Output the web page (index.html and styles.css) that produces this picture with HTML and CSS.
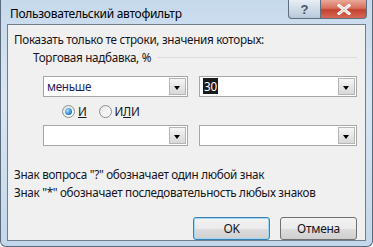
FILE: index.html
```html
<!DOCTYPE html>
<html lang="ru">
<head>
  <meta charset="UTF-8" />
  <title>Пользовательский автофильтр</title>
  <link rel="stylesheet" href="styles.css">
</head>
<body>
  <div class="window">
    <div class="titlebar">
      <span class="title">Пользовательский автофильтр</span>
      <div class="caption-btns">
        <button class="cap-btn help">?</button>
        <button class="cap-btn close">
          <svg width="14" height="11" viewBox="0 0 14 11"><path d="M2 1.5 L12 9.5 M12 1.5 L2 9.5" stroke="#fff" stroke-width="3" stroke-linecap="square"/><path d="M2 1.5 L12 9.5 M12 1.5 L2 9.5" stroke="#5a1e1e" stroke-width="0.6" opacity="0.4"/></svg>
        </button>
      </div>
    </div>

    <div class="client">
      <p class="intro">Показать только те строки, значения которых:</p>
      <div class="group-title">
        <span>Торговая надбавка, %</span>
        <span class="group-line"></span>
      </div>

      <div class="row">
        <div class="combo left"><span class="value">меньше</span><span class="arrow"></span></div>
        <div class="combo right"><span class="value"><span class="sel">30</span></span><span class="arrow"></span></div>
      </div>

      <div class="radios">
        <label class="radio"><span class="dot checked"></span><span><u>И</u></span></label>
        <label class="radio"><span class="dot"></span><span>И<u>Л</u>И</span></label>
      </div>

      <div class="row">
        <div class="combo left"><span class="value"></span><span class="arrow"></span></div>
        <div class="combo right"><span class="value"></span><span class="arrow"></span></div>
      </div>

      <p class="hint first">Знак вопроса "?" обозначает один любой знак</p>
      <p class="hint">Знак "*" обозначает последовательность любых знаков</p>

      <div class="actions">
        <button class="btn default">OK</button>
        <button class="btn">Отмена</button>
      </div>
    </div>
  </div>
</body>
</html>
```

FILE: styles.css
```css
body {
  margin: 0;
  background: #fff;
  font-family: 'Noto Sans', 'Open Sans', sans-serif;
  font-size: 11.7px;
  letter-spacing: -0.3px;
  color: #151520;
}

.window {
  width: 373px;
  height: 247px;
  box-sizing: border-box;
  border-radius: 0 0 6px 6px;
  border: 1px solid #5b6b7c;
  border-top: none;
  background: linear-gradient(180deg, #c6d9ec 0%, #d8e6f3 40%, #c3d7eb 100%);
  display: flex;
  flex-direction: column;
}

.titlebar {
  height: 30px;
  display: flex;
  align-items: flex-start;
  justify-content: space-between;
  padding-left: 9px;
}

.title {
  margin-top: 5px;
  font-size: 12px;
  color: #000;
}

.caption-btns {
  display: flex;
  margin-right: 5px;
}

.cap-btn {
  height: 19px;
  border: 1px solid #5f6f80;
  border-top: none;
  padding: 0;
  display: flex;
  align-items: center;
  justify-content: center;
}

.help {
  width: 32px;
  border-radius: 0 0 0 4px;
  border-right: none;
  background: linear-gradient(180deg, #e8eef5 0%, #cfdbe8 50%, #b9c9da 100%);
  color: #435669;
  font-size: 13px;
  font-weight: bold;
}

.close {
  width: 47px;
  border-radius: 0 0 4px 0;
  background: linear-gradient(180deg, #e9a99a 0%, #d7705e 45%, #c4412f 55%, #d66a56 100%);
}

.client {
  flex: 1;
  margin: 0 6px 5px 6px;
  border: 1px solid #707d8a;
  background: #f0f0f0;
  padding: 6px 0 0 6px;
}

.intro {
  margin: 0;
  line-height: 16px;
}

.group-title {
  display: flex;
  align-items: center;
  margin: 2px 8px 0 19px;
  line-height: 16px;
}

.group-line {
  flex: 1;
  border-top: 1px solid #dcdcdc;
  margin-left: 6px;
}

.row {
  display: flex;
  gap: 11px;
  margin-left: 29px;
}

.group-title + .row {
  margin-top: 11px;
}

.combo {
  height: 21px;
  box-sizing: border-box;
  border: 1px solid #a7a7a7;
  background: #fff;
  display: flex;
  align-items: stretch;
  padding: 1px;
}

.combo.left {
  width: 145px;
}

.combo.right {
  width: 158px;
}

.combo .value {
  flex: 1;
  padding-left: 2px;
  line-height: 17px;
  color: #1c1c64;
}

.sel {
  background: #1a1a1a;
  color: #fff;
  padding: 0 1px;
}

.arrow {
  width: 15px;
  border: 1px solid #b5b5b5;
  background: linear-gradient(180deg, #f6f6f6 0%, #e6e6e6 50%, #d8d8d8 100%);
  position: relative;
}

.arrow::after {
  content: '';
  position: absolute;
  left: 4px;
  top: 7px;
  border-left: 3px solid transparent;
  border-right: 3px solid transparent;
  border-top: 4px solid #000;
}

.radios {
  display: flex;
  gap: 12px;
  margin: 6px 0 6px 48px;
  height: 16px;
  align-items: center;
}

.radio {
  display: flex;
  align-items: center;
  gap: 3px;
}

.dot {
  width: 11px;
  height: 11px;
  border-radius: 50%;
  border: 1px solid #8e8f8f;
  background: linear-gradient(135deg, #e4e4e4, #ffffff);
  position: relative;
}

.dot.checked::after {
  content: '';
  position: absolute;
  left: 2px;
  top: 2px;
  width: 7px;
  height: 7px;
  border-radius: 50%;
  background: radial-gradient(circle at 35% 35%, #a6e0ff, #1c79c8 70%, #0f4f8a);
}

.hint {
  margin: 0;
  line-height: 18px;
}

.hint.first {
  margin-top: 19px;
}

.actions {
  display: flex;
  justify-content: flex-end;
  gap: 10px;
  margin: 16px 8px 0 0;
}

.btn {
  width: 77px;
  height: 23px;
  border: 1px solid #707070;
  border-radius: 3px;
  background: linear-gradient(180deg, #f2f2f2 0%, #ebebeb 50%, #dddddd 51%, #cfcfcf 100%);
  font-family: inherit;
  font-size: 12px;
  letter-spacing: inherit;
  color: #151520;
  padding: 0;
}

.btn.default {
  border-color: #3c7fb1;
  box-shadow: inset 0 0 0 1px #9fd5f5;
}
```
